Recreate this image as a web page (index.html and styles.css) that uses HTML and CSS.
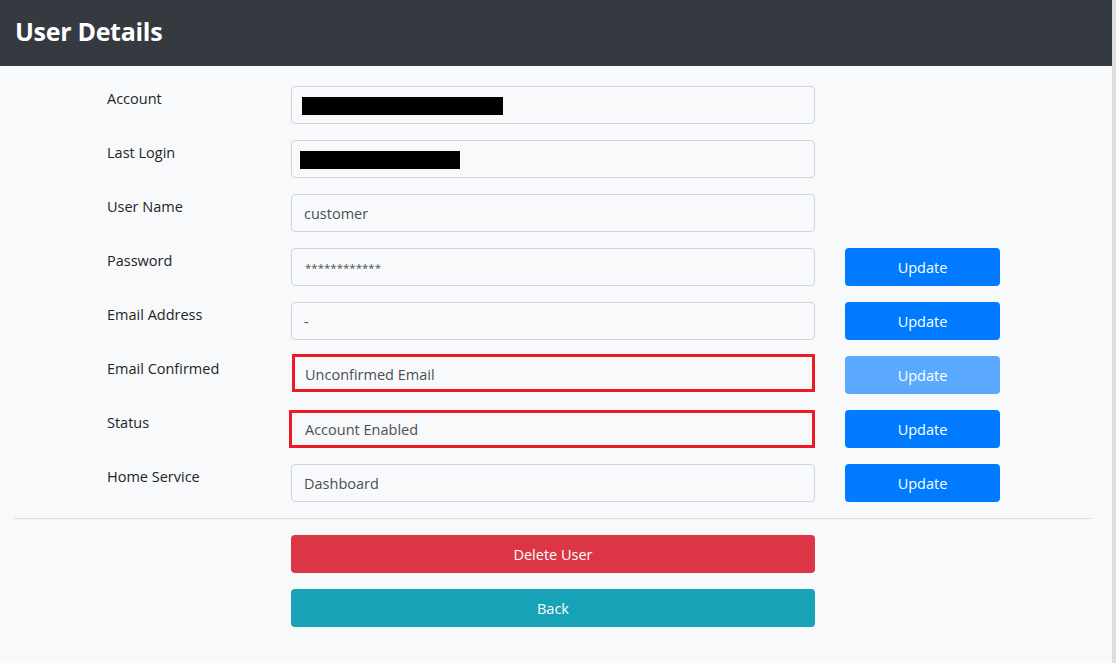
FILE: index.html
```html
<html>
<head>
  <meta charset="UTF-8">
  <link rel="stylesheet" href="styles.css">
</head>
<body>
  <header class="topbar">
    <h1 class="title">User Details</h1>
  </header>

  <div class="page">
    <div class="details">
      <div class="row">
        <label class="label">Account</label>
        <div class="field"><span class="redact redact-account"></span></div>
      </div>
      <div class="row">
        <label class="label">Last Login</label>
        <div class="field"><span class="redact redact-login"></span></div>
      </div>
      <div class="row">
        <label class="label">User Name</label>
        <div class="field">customer</div>
      </div>
      <div class="row">
        <label class="label">Password</label>
        <div class="field secret">************</div>
        <button class="btn btn-primary">Update</button>
      </div>
      <div class="row">
        <label class="label">Email Address</label>
        <div class="field">-</div>
        <button class="btn btn-primary">Update</button>
      </div>
      <div class="row">
        <label class="label">Email Confirmed</label>
        <div class="field marked">Unconfirmed Email</div>
        <button class="btn btn-primary disabled">Update</button>
      </div>
      <div class="row">
        <label class="label">Status</label>
        <div class="field marked marked-wide">Account Enabled</div>
        <button class="btn btn-primary">Update</button>
      </div>
      <div class="row">
        <label class="label">Home Service</label>
        <div class="field">Dashboard</div>
        <button class="btn btn-primary">Update</button>
      </div>
    </div>

    <hr class="divider">

    <div class="actions">
      <button class="btn btn-danger">Delete User</button>
      <button class="btn btn-info">Back</button>
    </div>
  </div>
</body>
</html>
```

FILE: styles.css
```css
body {
  margin: 0;
  padding: 0;
  background-color: #f8f9fa;
  font-family: "Open Sans", "Noto Sans", sans-serif;
  color: #212529;
  border-right: 4px solid #dedede;
  min-height: 663px;
  box-sizing: border-box;
}

.topbar {
  background-color: #343a40;
  height: 66px;
  display: flex;
  align-items: center;
  padding-left: 15px;
  padding-bottom: 4px;
  box-sizing: border-box;
}

.title {
  margin: 0;
  color: white;
  font-size: 25px;
  font-weight: 700;
  letter-spacing: -0.3px;
}

.page {
  padding: 20px 20px 0 14px;
}

.details {
  padding-left: 93px;
}

.row {
  display: grid;
  grid-template-columns: 154px 524px 155px;
  column-gap: 30px;
  height: 38px;
  margin-bottom: 16px;
}

.label {
  font-size: 14.5px;
  line-height: 24px;
  padding-top: 1px;
}

.field {
  box-sizing: border-box;
  height: 38px;
  border: 1px solid #ced4da;
  border-radius: 4px;
  background-color: #f8f9fa;
  padding: 0 12px;
  display: flex;
  align-items: center;
  font-size: 14.5px;
  color: #495057;
}

.secret {
  font-size: 11.5px;
  padding-left: 13px;
}

.marked {
  border: 3px solid #ed1c24;
  border-radius: 0;
  padding-left: 10px;
  padding-top: 3px;
  margin-left: 1px;
  margin-top: -2px;
}

.marked-wide {
  margin-left: -2px;
  margin-top: 0;
  padding-top: 0;
  padding-left: 13px;
}

.redact {
  display: block;
  background-color: black;
  height: 18px;
}

.redact-account {
  width: 201px;
  margin-left: -2px;
  margin-top: 1px;
}

.redact-login {
  width: 160px;
  margin-left: -4px;
  margin-top: 1px;
}

.btn {
  box-sizing: border-box;
  height: 38px;
  border: none;
  border-radius: 4px;
  color: white;
  font-family: "Open Sans", "Noto Sans", sans-serif;
  font-size: 14.5px;
  cursor: pointer;
}

.btn-primary {
  background-color: #007bff;
}

.btn-primary.disabled {
  background-color: #5aa9ff;
}

.btn-danger {
  background-color: #dc3545;
}

.btn-info {
  background-color: #17a2b8;
}

.divider {
  border: none;
  border-top: 1px solid #dcdddf;
  margin: 0 0 16px 0;
  width: 1077px;
}

.actions {
  display: flex;
  flex-direction: column;
  gap: 16px;
  width: 524px;
  margin-left: 277px;
}
```
